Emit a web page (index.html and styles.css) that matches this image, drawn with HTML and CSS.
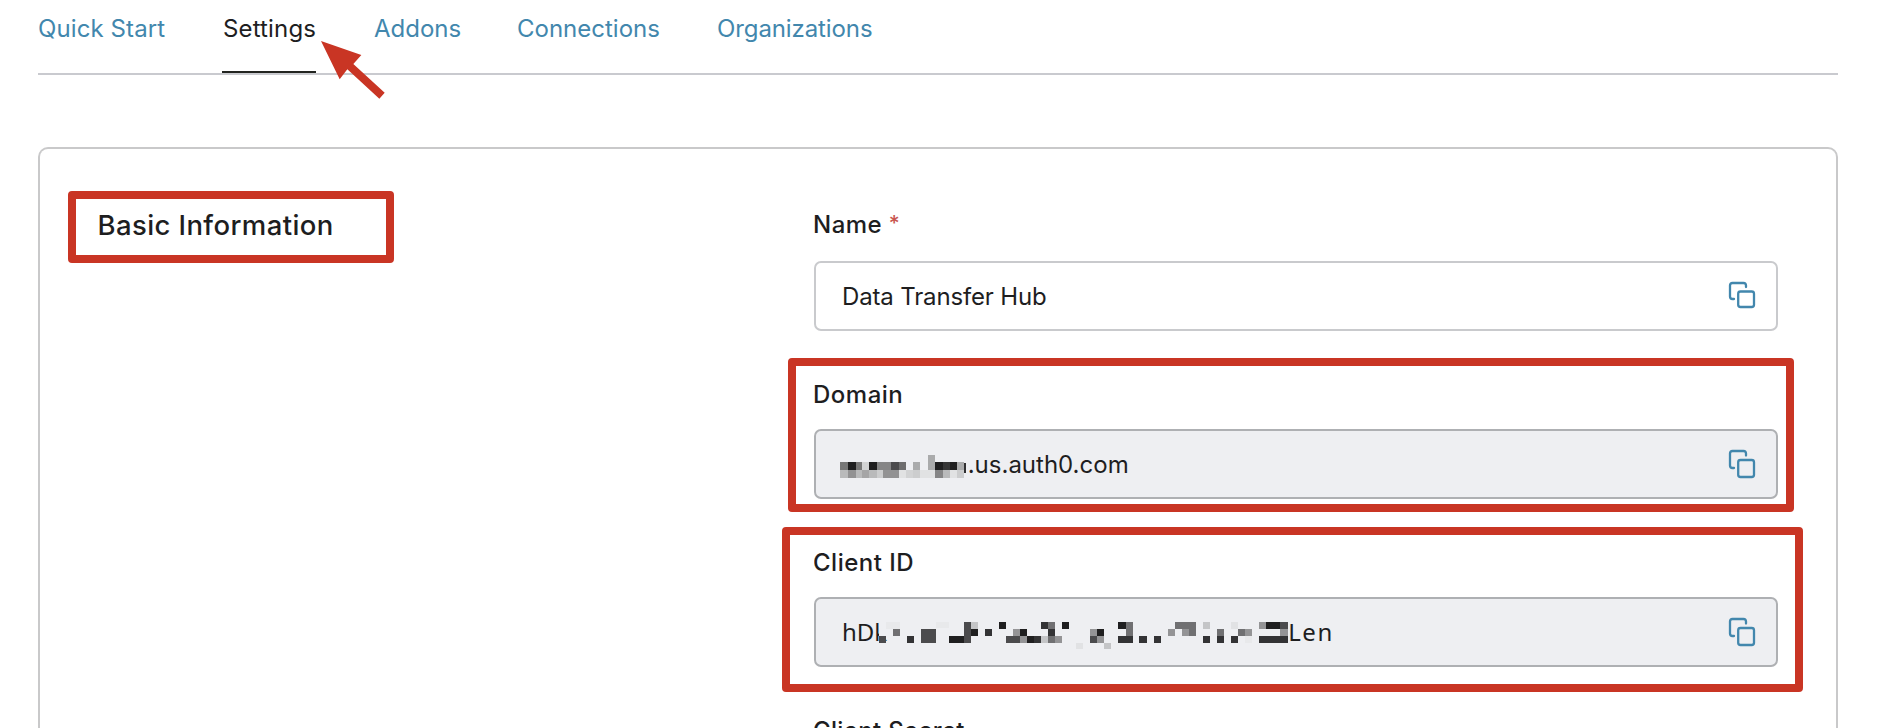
FILE: index.html
```html
<!DOCTYPE html>
<html lang="en">
<head>
<meta charset="utf-8">
<title>Application Settings</title>
<link rel="stylesheet" href="styles.css">
</head>
<body>
<nav class="tabs">
  <a class="tab tab-quick">Quick Start</a>
  <a class="tab tab-settings active">Settings</a>
  <a class="tab tab-addons">Addons</a>
  <a class="tab tab-connections">Connections</a>
  <a class="tab tab-orgs">Organizations</a>
</nav>
<svg class="arrow" viewBox="963 123 191 173"><path fill="#c93524" d="M963 123L1084 165L1060 192L1154 278L1138 296L1042 208L1019 238Z"/></svg>
<main class="card">
  <section class="intro"><h2 class="title">Basic Information</h2></section>
  <section class="fields">
    <div class="field field-name">
      <label class="label"><span class="l-name">Name</span><span class="star">*</span></label>
      <div class="input"><span class="v-name">Data Transfer Hub</span>
        <svg class="copy" viewBox="0 0 26 28"><path d="M17 5V3.500Q17 1 14.500 1H3.500Q1 1 1 3.500V14.500Q1 17 3.500 17H5"/><rect x="9.200" y="9.500" width="15.800" height="15.500" rx="2.300"/></svg>
      </div>
    </div>
    <div class="field">
      <label class="label"><span class="l-domain">Domain</span></label>
      <div class="input locked">
        <svg class="mosaic mosaic-domain" viewBox="61 44 377 68" shape-rendering="crispEdges">
          <path fill="#777" d="M61 66h25v24h-25zM108 66h19v24h-19z"/>
          <path fill="#1f1f20" d="M86 66h22v24h-22zM149 66h24v24h-24zM345 66h24v24h-24zM390 66h22v24h-22z"/>
          <path fill="#d2d3d4" d="M127 66h22v24h-22zM258 90h22v22h-22z"/>
          <path fill="#858586" d="M173 66h42v24h-42zM345 90h24v22h-24z"/>
          <path fill="#4b4b4d" d="M215 66h22v24h-22z"/><path fill="#6d6d6e" d="M237 66h21v24h-21z"/>
          <path fill="#aaabac" d="M280 66h22v24h-22zM324 44h21v22h-21zM324 66h21v24h-21zM412 66h22v24h-22z"/>
          <path fill="#363637" d="M369 66h21v24h-21z"/>
          <path fill="#b9babb" d="M61 90h25v22h-25zM108 90h19v22h-19zM149 90h24v22h-24zM369 90h21v22h-21z"/>
          <path fill="#929293" d="M86 90h22v22h-22zM191 90h24v22h-24zM215 90h22v22h-22z"/>
          <path fill="#a5a5a6" d="M127 90h22v22h-22z"/>
          <path fill="#cccdce" d="M173 90h18v22h-18zM280 90h22v22h-22zM412 90h22v22h-22z"/>
          <path fill="#e1e2e3" d="M237 90h21v22h-21zM302 90h43v22h-43zM390 90h22v22h-22z"/>
          <path fill="#303031" d="M434 69h4v29h-4z"/>
        </svg><span class="v-domain">.us.auth0.com</span>
        <svg class="copy" viewBox="0 0 26 28"><path d="M17 5.500V3.500Q17 1 14.500 1H3.500Q1 1 1 3.500V15.500Q1 18 3.500 18H5"/><rect x="9.200" y="10" width="15.800" height="17" rx="2.300"/></svg>
      </div>
    </div>
    <div class="field">
      <label class="label"><span class="l-client">Client ID</span></label>
      <div class="input locked">
        <span class="v-id">hDk</span><svg class="mosaic mosaic-client" viewBox="177 69 1228 84" shape-rendering="crispEdges">
          <path fill="#eeeff2" d="M177 60h22v72h-22z"/>
          <path fill="#e8e9eb" d="M199 69h40v21h-40zM347 69h40v18h-40zM1275 111h21v21h-21z"/>
          <path fill="#4b4b4d" d="M177 111h21v21h-21zM303 90h44v42h-44zM432 69h21v63h-21zM558 111h42v21h-42zM810 111h21v21h-21zM1380 69h24v21h-24z"/>
          <path fill="#707072" d="M219 90h21v21h-21zM684 69h21v21h-21zM918 69h20v42h-20zM1065 69h63v21h-63zM1107 90h21v21h-21zM1191 90h21v21h-21zM1254 90h22v21h-22z"/>
          <path fill="#333335" d="M261 111h21v21h-21zM495 90h21v21h-21zM663 69h21v21h-21zM684 90h21v21h-21zM642 111h21v21h-21zM895 111h43v21h-43zM958 111h22v21h-22zM1002 111h21v21h-21zM1149 111h21v21h-21zM1191 111h21v21h-21zM1233 111h21v21h-21zM1317 111h87v21h-87z"/>
          <path fill="#1f1f20" d="M388 111h44v21h-44zM453 90h21v21h-21zM537 69h21v21h-21zM600 90h21v21h-21zM621 111h21v21h-21zM726 69h21v21h-21zM831 90h21v21h-21zM895 69h23v21h-23zM1338 69h42v21h-42z"/>
          <path fill="#c4c5c7" d="M453 69h21v21h-21zM663 111h21v21h-21zM1149 69h21v21h-21zM852 132h21v18h-21z"/>
          <path fill="#949496" d="M579 90h21v21h-21zM600 111h21v21h-21zM705 111h21v21h-21zM810 90h21v21h-21zM831 111h21v21h-21zM1044 90h21v21h-21zM1086 90h21v21h-21zM1276 90h20v21h-20zM1317 69h21v21h-21zM1380 90h24v21h-24z"/>
          <path fill="#707072" d="M684 111h21v21h-21z"/>
          <path fill="#e1e2e4" d="M768 132h21v18h-21zM1233 69h21v21h-21z"/>
        </svg><span class="v-id v-id-end">Len</span>
        <svg class="copy" viewBox="0 0 26 28"><path d="M17 5.500V3.500Q17 1 14.500 1H3.500Q1 1 1 3.500V15.500Q1 18 3.500 18H5"/><rect x="9.200" y="10" width="15.800" height="17" rx="2.300"/></svg>
      </div>
    </div>
    <div class="field field-last"><label class="label"><span class="l-secret">Client Secret</span></label></div>
  </section>
</main>
<div class="mark mark-title"></div>
<div class="mark mark-domain"></div>
<div class="mark mark-client"></div>
</body>
</html>
```
FILE: styles.css
```css
* { box-sizing: border-box; }
html { height: 728px; overflow: hidden; }
body {
  position: relative;
  height: 728px;
  margin: 0;
  padding: 0 46px 0 38px;
  overflow: hidden;
  background: #fff;
  color: #1e1e1f;
  font: 24px/30px Inter, "Liberation Sans", sans-serif;
}
.tabs { display: flex; gap: 58px; height: 75px; border-bottom: 2px solid #c9cacf; }
.tab { height: 73px; padding-top: 14px; color: #4287ad; white-space: nowrap; }
.tab.active { color: #1e1e1f; border-bottom: 2px solid #222420; }
.tab-quick { width: 126px; letter-spacing: 0.1px; }
.tab-settings { width: 94px; padding-left: 1px; letter-spacing: 0.15px; }
.tab-addons { width: 85px; }
.tab-connections { width: 142px; }
.tab-orgs { letter-spacing: -0.1px; }
.arrow { position: absolute; left: 321px; top: 41px; width: 63.700px; height: 57.700px; }
.card {
  display: grid;
  grid-template-columns: 774px 964px;
  height: 581px;
  margin-top: 72px;
  border: 2px solid #c9c9ca;
  border-bottom: 0;
  border-radius: 10px 10px 0 0;
}
.title { margin: 0; padding: 59px 0 0 57.500px; font-size: 27.500px; line-height: 34px; font-weight: 500; letter-spacing: 0.400px; white-space: nowrap; }
.fields { height: 579px; padding-top: 61px; overflow: hidden; }
.field { height: 168px; }
.field-name { height: 170px; }
.field-last { height: 12px; }
.label { display: flex; height: 49px; margin-left: -1px; font-weight: 500; letter-spacing: 0.500px; white-space: nowrap; }
.field-name .label { height: 51px; }
.l-secret { letter-spacing: 0.350px; }
.star { margin: 1px 0 0 6.500px; color: #c9564f; font-size: 21px; font-weight: 500; line-height: 26px; }
.input {
  display: flex;
  align-items: center;
  width: 964px;
  height: 70px;
  padding: 0 21px 0 26px;
  border: 2px solid #c9cacd;
  border-radius: 7px;
  white-space: nowrap;
}
.v-name { margin-top: 2px; letter-spacing: -0.150px; }
.v-domain { margin: 2px 0 0 2px; }
.locked { background: #eeeff2; border-color: #aeb0b3; }
.copy { width: 26px; height: 28px; margin-left: auto; fill: none; stroke: #4287ad; stroke-width: 2.300; stroke-linecap: round; stroke-linejoin: round; overflow: visible; }
.mosaic { flex: none; }
.mosaic-domain { width: 125.700px; height: 22.700px; margin: 5px 0 0 -2px; }
.mosaic-client { width: 409.300px; height: 28px; z-index: 1; margin-top: 8px; }
.v-id { width: 37px; font-family: "Noto Sans", sans-serif; }
.v-id-end { width: auto; letter-spacing: 1.500px; }
.mark { position: absolute; border: 8px solid #c93524; border-radius: 4px; }
.mark-title { left: 68px; top: 191px; width: 326px; height: 72px; }
.mark-domain { left: 788px; top: 358px; width: 1006px; height: 154px; }
.mark-client { left: 782px; top: 527px; width: 1021px; height: 165px; }
```
